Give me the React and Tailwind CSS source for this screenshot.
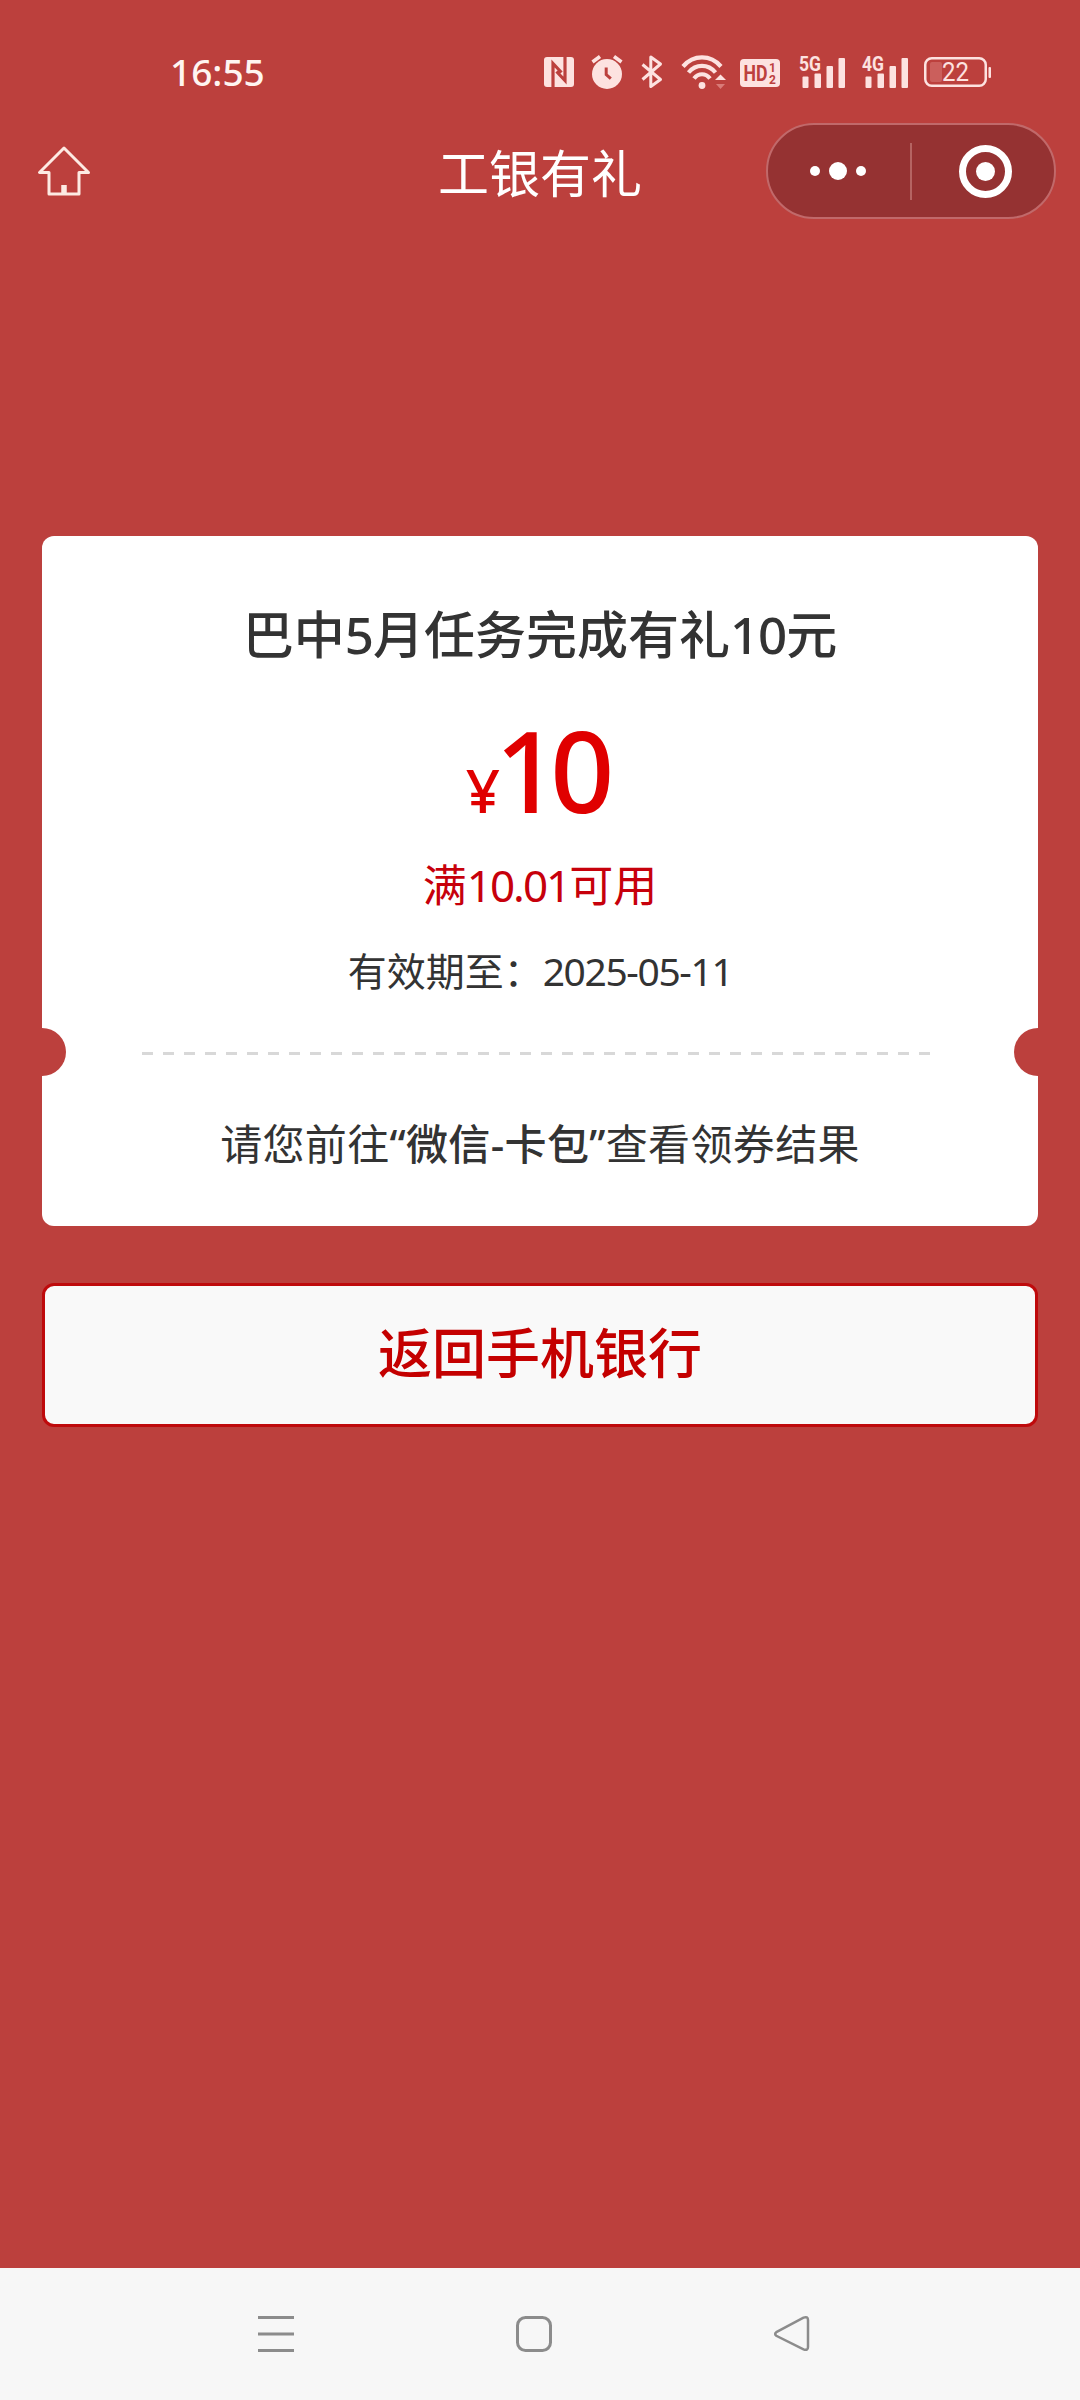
import React from "react";

const NfcIcon = () => (
  <svg width="30" height="30" viewBox="0 0 30 30">
    <rect width="30" height="30" rx="3" fill="#fde2e0" />
    <path
      d="M9 30V6.500L17.500 15.500M21 0V23.500L12.500 14.500"
      fill="none"
      stroke="#bc403d"
      strokeWidth="3.200"
    />
  </svg>
);

const AlarmIcon = () => (
  <svg width="32" height="34" viewBox="0 0 32 34" fill="none">
    <circle cx="16" cy="19" r="15" fill="#fde2e0" />
    <path d="M1.500 7L9 1.500M30.500 7L23 1.500" stroke="#fde2e0" strokeWidth="3.600" />
    <path d="M15.200 12.500v7l4.600 4.200" stroke="#bc403d" strokeWidth="3" />
  </svg>
);

const BluetoothIcon = () => (
  <svg width="22" height="34" viewBox="0 0 22 34" fill="none">
    <path
      d="M1.500 9.500L19.500 24.500L9.800 31.500V2L19.500 9L1.500 24.500"
      stroke="#fde2e0"
      strokeWidth="3"
      strokeLinejoin="round"
    />
  </svg>
);

const WifiIcon = () => (
  <svg width="46" height="35" viewBox="0 0 46 35" fill="none">
    <g stroke="#fde2e0" strokeWidth="4.200">
      <path d="M2 11.500C12.500-.6 29.500-.6 40 11.500" />
      <path d="M7.500 17.500C15 8.700 27 8.700 34.500 17.500" />
      <path d="M13 23.500C17.500 17.800 24.500 17.800 29 23.500" />
    </g>
    <circle cx="21" cy="30.500" r="3.400" fill="#fde2e0" />
    <path d="M34 25l5.500-5.500L45 25z" fill="#fde2e0" />
    <path d="M35 29h9l-4.500 5z" fill="#d97b78" />
  </svg>
);

const HdIcon = () => (
  <svg
    width="40"
    height="28"
    viewBox="0 0 40 28"
    fontFamily="Roboto, sans-serif"
    fontWeight="700"
    fill="#bc403d"
  >
    <rect width="40" height="28" rx="4" fill="#fde2e0" />
    <text x="3.500" y="22" fontSize="22.500" textLength="24" lengthAdjust="spacingAndGlyphs">
      HD
    </text>
    <text x="29" y="13" fontSize="12">1</text>
    <text x="29" y="24.500" fontSize="12">2</text>
  </svg>
);

const SignalIcon = ({ label }) => (
  <svg width="47" height="45" viewBox="0 -6 47 45" fill="#fde2e0">
    <text
      x="0"
      y="15"
      fontSize="21"
      fontWeight="700"
      fontFamily="Roboto, sans-serif"
      textLength="22"
      lengthAdjust="spacingAndGlyphs"
    >
      {label}
    </text>
    <rect x="3.500" y="20.500" width="6" height="11.500" rx="1" />
    <rect x="15.500" y="17.500" width="6.500" height="14.500" rx="1" />
    <rect x="27.500" y="10" width="6.500" height="22" rx="1" />
    <rect x="39.500" y="2" width="6.500" height="30" rx="1" />
  </svg>
);

const BatteryIcon = () => (
  <svg width="68" height="30" viewBox="0 0 68 30">
    <rect x="1.250" y="1.250" width="60.500" height="27.500" rx="6.500" fill="none" stroke="#fde2e0" strokeWidth="2.500" />
    <rect x="6" y="5" width="12" height="20" rx="2" fill="#cb5f5c" />
    <rect x="64.500" y="10" width="2.500" height="11" rx="1" fill="#fde2e0" />
    <text
      x="31.500"
      y="24"
      fontSize="25"
      fontFamily="Roboto, sans-serif"
      textAnchor="middle"
      textLength="27"
      lengthAdjust="spacingAndGlyphs"
      fill="#fde2e0"
    >
      22
    </text>
  </svg>
);

const HomeIcon = () => (
  <svg width="54" height="52" viewBox="0 0 54 52" fill="none">
    <path
      d="M27 3L2.500 27.500H12V49H42V27.500H51.500Z"
      stroke="#fdeae3"
      strokeWidth="3"
      strokeLinejoin="round"
    />
    <path d="M27 40v9" stroke="#fdeae3" strokeWidth="5.500" />
  </svg>
);

const StatusBar = () => (
  <div className="flex h-[123px] items-start text-[#fff5f1]">
    <span className="ml-[170px] mt-[47px] w-[374px] text-[37px] font-medium leading-[50px]">
      16:55
    </span>
    <div className="mt-[54px] flex h-9 items-center">
      <NfcIcon />
      <div className="ml-[17px]">
        <AlarmIcon />
      </div>
      <div className="ml-[18px]">
        <BluetoothIcon />
      </div>
      <div className="ml-[18px]">
        <WifiIcon />
      </div>
      <div className="ml-[13px] mt-[2px]">
        <HdIcon />
      </div>
      <div className="ml-[19px]">
        <SignalIcon label="5G" />
      </div>
      <div className="ml-[16px]">
        <SignalIcon label="4G" />
      </div>
      <div className="ml-[15px]">
        <BatteryIcon />
      </div>
    </div>
  </div>
);

const Header = () => (
  <div className="flex h-[96px] items-center justify-between pl-[37px] pr-[24px]">
    <div className="w-[290px]">
      <HomeIcon />
    </div>
    <h1 className="mr-[13px] mt-[4px] text-[51px] leading-[60px] text-white">工银有礼</h1>
    <div className="flex h-[96px] w-[290px] items-center rounded-full border-2 border-[#c1696a] bg-[#953232]">
      <div className="ml-[42px] flex items-center gap-[9px]">
        <span className="size-[10px] rounded-full bg-white" />
        <span className="size-[18px] rounded-full bg-white" />
        <span className="size-[10px] rounded-full bg-white" />
      </div>
      <span className="ml-[44px] h-[57px] w-[2px] bg-[#b56462]" />
      <div className="ml-[47px] flex size-[53px] items-center justify-center rounded-full border-[7px] border-white">
        <span className="size-[19px] rounded-full bg-white" />
      </div>
    </div>
  </div>
);

const CouponCard = () => (
  <div className="relative mx-[42px] mt-[317px] flex h-[690px] flex-col items-center overflow-hidden rounded-[12px] bg-white text-[#333]">
    <h2 className="mt-[66px] text-[51px] font-medium leading-[64px]">
      巴中<span className="tracking-[-1px]">5</span>月任务完成有礼
      <span className="tracking-[-1px]">10</span>元
    </h2>

    {/* Amount */}
    <div className="mt-[40px] flex h-[128px] items-baseline font-medium text-[#e00000]">
      <span className="mr-[-5px] text-[60px] leading-[128px]">¥</span>
      <span className="mr-[9px] text-[112px] leading-[128px] tracking-[-9px]">10</span>
    </div>

    <p className="mt-[25px] text-[44px] leading-[52px] text-[#c7000b]">
      满<span className="tracking-[-2px]">10.01</span>可用
    </p>
    <p className="mt-[38px] text-[39px] leading-[44px]">
      有效期至：<span className="tracking-[-1.4px]">2025-05-11</span>
    </p>

    {/* Tear line */}
    <div className="mt-[59px] ml-[100px] h-[3px] w-[789px] self-start bg-[repeating-linear-gradient(90deg,#d8d8d8_0_11px,transparent_11px_21px)]" />
    <span className="absolute -left-6 top-[492px] size-12 rounded-full bg-[#bc403d]" />
    <span className="absolute -right-6 top-[492px] size-12 rounded-full bg-[#bc403d]" />

    <p className="mt-[64px] text-[42px] leading-[50px] tracking-[0.35px]">
      请您前往<b className="font-medium">“微信-卡包”</b>查看领券结果
    </p>
  </div>
);

const NavBar = () => (
  <div className="mt-auto flex h-[132px] items-center bg-[#f7f7f7] pl-[257px]">
    <svg width="38" height="38" viewBox="0 0 38 38" fill="none" stroke="#8c8c8c" strokeWidth="3">
      <path d="M1 2.500h36M1 19h36M1 35.500h36" />
    </svg>
    <svg className="ml-[220px]" width="38" height="38" viewBox="0 0 38 38" fill="none" stroke="#8c8c8c" strokeWidth="3">
      <rect x="2.500" y="2.500" width="33" height="33" rx="8" />
    </svg>
    <svg
      className="ml-[220px]"
      width="38"
      height="38"
      viewBox="0 0 38 38"
      fill="none"
      stroke="#8c8c8c"
      strokeWidth="2.500"
    >
      <path d="M3.300 17.200L30.500 2.600Q35 1 35 5V32Q35 36 30.500 34.400L3.300 20.800Q1 19 3.300 17.200Z" />
    </svg>
  </div>
);

const App = () => {
  return (
    <div
      lang="zh-CN"
      className="flex h-[2400px] w-[1080px] flex-col bg-[#bc403d] font-['Noto_Sans','Noto_Sans_CJK_SC',sans-serif]"
    >
      <StatusBar />
      <Header />
      <CouponCard />
      <button
        type="button"
        className="mx-[42px] mt-[57px] h-[144px] rounded-[12px] border-[3px] border-[#bf0a0c] bg-[#f9f9f9] pb-[4px] text-[54px] font-medium leading-[64px] text-[#c40000]"
      >
        返回手机银行
      </button>
      <NavBar />
    </div>
  );
};

export default App;
